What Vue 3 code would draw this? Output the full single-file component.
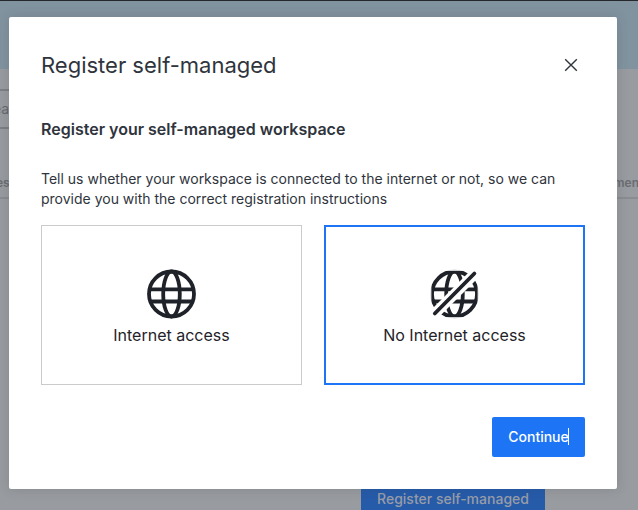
<script setup>
import { ref } from 'vue'

const selected = ref('offline')
const options = [
  { id: 'online', label: 'Internet access' },
  { id: 'offline', label: 'No Internet access' },
]
</script>

<template>
  <div class="page">
    <div class="banner"></div>
    <div class="search"><span>ea</span></div>
    <div class="table-head"><span>es</span><span>men</span></div>
    <div class="page-actions"><button class="page-button">Register self-managed</button></div>

    <div class="backdrop">
      <section class="modal">
        <header class="modal-header">
          <h1>Register self-managed</h1>
          <button class="close" aria-label="Close">
            <svg width="14" height="14" viewBox="0 0 14 14"><path d="M1.2 1.2 12.8 12.8M12.8 1.2 1.2 12.8" /></svg>
          </button>
        </header>
        <h2>Register your self-managed workspace</h2>
        <p>Tell us whether your workspace is connected to the internet or not, so we can provide you with the correct registration instructions</p>
        <div class="options">
          <button
            v-for="o in options"
            :key="o.id"
            class="option"
            :class="{ selected: selected === o.id }"
            @click="selected = o.id"
          >
            <svg v-if="o.id === 'online'" class="globe" viewBox="0 0 50 50">
              <circle cx="25" cy="25" r="22.5" />
              <ellipse cx="25" cy="25" rx="8.3" ry="22.5" />
              <path d="M3.8 20.3H46.2M3.8 32.5H46.2" />
            </svg>
            <svg v-else class="globe" viewBox="0 0 50 50">
              <defs>
                <mask id="slash-gap" maskUnits="userSpaceOnUse" x="0" y="0" width="50" height="50">
                  <rect width="50" height="50" fill="#fff" />
                  <path d="M-2 52 52-2" stroke="#000" stroke-width="10.5" />
                </mask>
              </defs>
              <g mask="url(#slash-gap)">
                <circle cx="25" cy="25" r="22.5" />
                <ellipse cx="25" cy="25" rx="8.3" ry="22.5" />
                <path d="M3.8 20.3H46.2M3.8 32.5H46.2" />
              </g>
              <path class="slash" d="M5.3 44.5 44.9 4.5" />
            </svg>
            <span>{{ o.label }}</span>
          </button>
        </div>
        <footer class="modal-footer">
          <button class="continue"><span>Continue</span><i class="caret"></i></button>
        </footer>
      </section>
    </div>
  </div>
</template>

<style>
body {
  margin: 0;
  overflow: hidden;
}
</style>

<style scoped>
.page {
  position: relative;
  box-sizing: border-box;
  width: 638px;
  height: 510px;
  overflow: hidden;
  display: flex;
  flex-direction: column;
  border-top: 1px solid #25272b;
  background: #989b9f;
  font-family: Inter, "Liberation Sans", sans-serif;
  color: #2f343d;
}
h1, h2, p {
  margin: 0;
}
button {
  margin: 0;
  padding: 0;
  border: 0;
  background: none;
  font-family: inherit;
  color: inherit;
}
.banner {
  flex: none;
  height: 68px;
  background: #8293a0;
}
.search {
  flex: none;
  box-sizing: border-box;
  width: 400px;
  height: 40px;
  margin-top: 20px;
  border: solid #7c7f84;
  border-width: 2px 0;
  font-size: 14px;
  line-height: 36px;
  color: #67696e;
}
.search span {
  margin-left: -7px;
}
.table-head {
  flex: none;
  display: flex;
  justify-content: space-between;
  box-sizing: border-box;
  height: 30px;
  margin-top: 40px;
  padding-top: 4px;
  border-bottom: 2px solid #898c90;
  font-size: 12px;
  font-weight: 600;
  line-height: 20px;
  color: #6b6d72;
}
.table-head span:first-child {
  margin-left: -4px;
}
.table-head span:last-child {
  margin-right: -1px;
}
.page-actions {
  margin-top: 280px;
  padding-left: 361px;
}
.page-button {
  width: 184px;
  height: 40px;
  background: #265ba9;
  color: #989da8;
  font-size: 14px;
  font-weight: 500;
  line-height: 20px;
}
.backdrop {
  position: absolute;
  inset: -1px 0 0;
  display: flex;
  align-items: flex-start;
  padding: 17px 21px 0 9px;
}
.modal {
  flex: 1;
  box-sizing: border-box;
  height: 472px;
  padding: 32px;
  border-radius: 2px;
  background: #fff;
  box-shadow: 0 0 12px rgba(47, 52, 61, 0.18);
}
.modal-header {
  display: flex;
  align-items: center;
  justify-content: space-between;
  height: 32px;
}
h1 {
  font-size: 22px;
  font-weight: 400;
  line-height: 32px;
}
.close {
  display: flex;
  align-items: center;
  justify-content: center;
  width: 28px;
  height: 28px;
}
.close svg {
  fill: none;
  stroke: #2f343d;
  stroke-width: 1.4;
}
h2 {
  margin-top: 36px;
  font-size: 16px;
  font-weight: 600;
  line-height: 24px;
}
p {
  margin-top: 28px;
  font-size: 14px;
  line-height: 20px;
}
.options {
  display: flex;
  justify-content: space-between;
  margin-top: 16px;
}
.option {
  width: 261px;
  display: flex;
  flex-direction: column;
  align-items: center;
  box-sizing: border-box;
  height: 160px;
  padding-top: 43px;
  border: 1px solid #cbcbcb;
  background: #fff;
  font-size: 16px;
  line-height: 24px;
  color: #1f2329;
}
.option.selected {
  padding-top: 42px;
  border: 2px solid #1d74f5;
}
.globe {
  width: 51px;
  height: 50px;
  margin-bottom: 4px;
  fill: none;
  stroke: #1f2329;
  stroke-width: 3.8;
}
.slash {
  stroke-linecap: round;
}
.modal-footer {
  display: flex;
  justify-content: flex-end;
  margin-top: 32px;
}
.continue {
  display: flex;
  align-items: center;
  justify-content: center;
  width: 93px;
  height: 40px;
  border-radius: 2px;
  background: #1d74f5;
  color: #fff;
  font-size: 14px;
  font-weight: 500;
}
.continue span {
  padding-bottom: 2px;
}
.caret {
  width: 1px;
  height: 17px;
  margin: 0 0 1px -1px;
  background: #fff;
}
</style>
